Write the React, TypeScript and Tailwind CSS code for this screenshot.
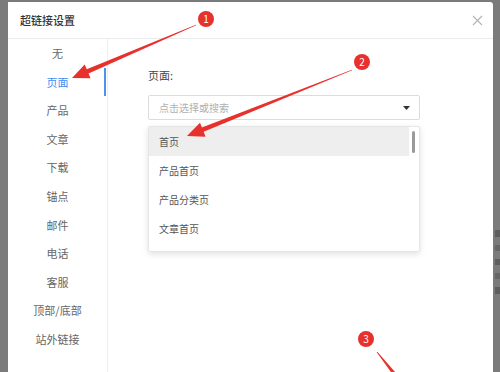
import React from 'react';

const font = { fontFamily: '"Noto Sans CJK SC", "Noto Sans", sans-serif' };

const menu = ['无', '页面', '产品', '文章', '下载', '锚点', '邮件', '电话', '客服', '顶部/底部', '站外链接'];
const options = ['首页', '产品首页', '产品分类页', '文章首页'];

type P = [number, number];

// tapering red annotation arrow
const arrowPoints = (tail: P, tip: P, headLen = 17, headW = 15, shaftW = 4.5) => {
  const dx = tip[0] - tail[0];
  const dy = tip[1] - tail[1];
  const len = Math.hypot(dx, dy);
  const ux = dx / len;
  const uy = dy / len;
  const nx = -uy;
  const ny = ux;
  const bx = tip[0] - ux * headLen;
  const by = tip[1] - uy * headLen;
  const pts: P[] = [
    [tail[0] + nx * 0.4, tail[1] + ny * 0.4],
    [bx + (nx * shaftW) / 2, by + (ny * shaftW) / 2],
    [bx + (nx * headW) / 2, by + (ny * headW) / 2],
    tip,
    [bx - (nx * headW) / 2, by - (ny * headW) / 2],
    [bx - (nx * shaftW) / 2, by - (ny * shaftW) / 2],
    [tail[0] - nx * 0.4, tail[1] - ny * 0.4],
  ];
  return pts.map((p) => p.join(',')).join(' ');
};

const Badge = ({ n, x, y }: { n: number; x: number; y: number }) => (
  <g>
    <circle cx={x} cy={y} r={10} fill="#ffffff" opacity={0.7} />
    <circle cx={x} cy={y} r={8} fill="#e8302c" />
    <text x={x} y={y + 3.5} textAnchor="middle" fontSize="10" fill="#ffffff" style={font}>
      {n}
    </text>
  </g>
);

const App = () => {
  return (
    <div className="relative w-[500px] h-[372px] overflow-hidden bg-[#7b7b7b] pl-[8px] pt-[2px]" style={font}>
      <div className="flex h-[400px]">
        <div className="w-[485px] bg-white rounded-tr-[3px] flex flex-col">
          <div className="h-[37px] flex items-center justify-between pl-[12px] pr-[10px] border-b border-[#ebebeb]">
            <span className="text-[11px] font-medium text-[#333]">超链接设置</span>
            <svg width="11" height="11" viewBox="0 0 11 11" className="mt-[1px]">
              <path d="M1 1L10 10M10 1L1 10" stroke="#b5b5b5" strokeWidth="1.2" />
            </svg>
          </div>
          <div className="flex flex-1">
            <div className="w-[100px] border-r border-[#eeeeee] flex flex-col">
              {menu.map((m, i) => (
                <div
                  key={m}
                  className={
                    'relative h-[28.6px] flex items-center justify-center text-[11px] ' +
                    (i === 1 ? 'text-[#3d8ef0]' : 'text-[#666]')
                  }
                >
                  {m}
                  {i === 1 && <div className="absolute right-[1px] top-0 bottom-0 w-[2px] bg-[#4a94ee]" />}
                </div>
              ))}
            </div>
            <div className="flex-1 pl-[40px] pt-[28px]">
              <div className="text-[11px] text-[#444] h-[16px] leading-[16px]">页面:</div>
              <div className="mt-[12px] w-[272px] h-[25px] border border-[#dcdcdc] rounded-[2px] flex items-center justify-between pl-[10px] pr-[9px]">
                <span className="text-[10px] text-[#b0b0b0]">点击选择或搜索</span>
                <svg width="7" height="4" viewBox="0 0 7 4">
                  <path d="M0 0H7L3.5 4Z" fill="#333" />
                </svg>
              </div>
              <div className="relative mt-[6px] w-[272px] h-[126px] border border-[#e6e6e6] rounded-[2px] shadow-[0_2px_6px_rgba(0,0,0,0.12)] pr-[10px]">
                {options.map((o, i) => (
                  <div
                    key={o}
                    className={
                      'h-[29px] flex items-center pl-[10px] text-[10px] text-[#555] ' +
                      (i === 0 ? 'bg-[#eeeeee] h-[28px]' : '')
                    }
                  >
                    {o}
                  </div>
                ))}
                <div className="absolute right-[4px] top-[4px] w-[3px] h-[22px] rounded-full bg-[#9a9a9a]" />
              </div>
            </div>
          </div>
        </div>
        <div className="flex-1 flex flex-col gap-[8px] pt-[228px] pl-[2px]">
          <div className="w-[5px] h-[7px] bg-[#5e5e5e]" />
          <div className="w-[5px] h-[6px] bg-[#666]" />
          <div className="w-[5px] h-[6px] bg-[#5e5e5e]" />
          <div className="w-[5px] h-[6px] bg-[#666]" />
          <div className="w-[5px] h-[7px] bg-[#5e5e5e]" />
        </div>
      </div>

      <svg className="absolute inset-0 pointer-events-none" width="500" height="372" viewBox="0 0 500 372">
        <polygon points={arrowPoints([196, 25], [72, 78])} fill="#e8302c" />
        <polygon points={arrowPoints([352, 70], [187, 136])} fill="#e8302c" />
        <polygon points={arrowPoints([377, 352], [412, 396])} fill="#e8302c" />
        <Badge n={1} x={206} y={19} />
        <Badge n={2} x={362} y={62} />
        <Badge n={3} x={366} y={339} />
      </svg>
    </div>
  );
};

export default App;
